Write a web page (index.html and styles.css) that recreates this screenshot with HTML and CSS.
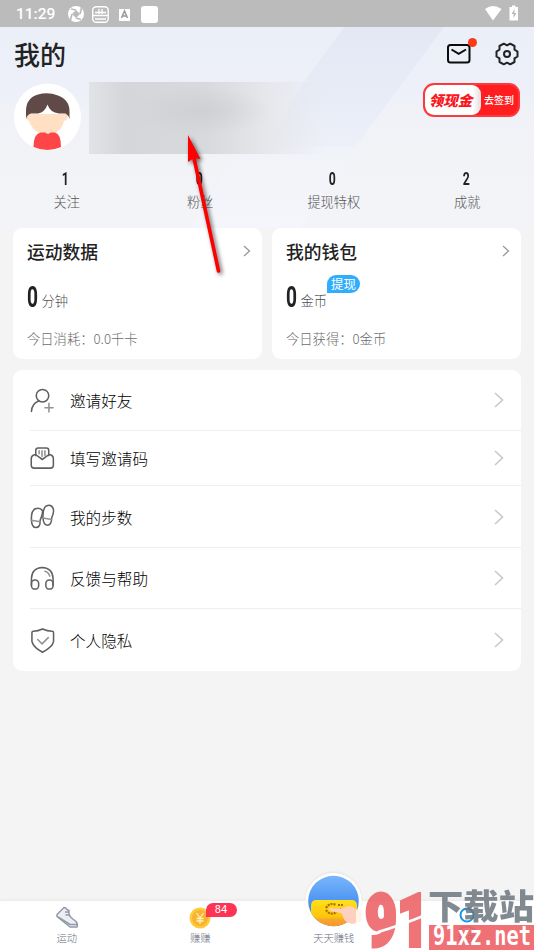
FILE: index.html
```html
<!DOCTYPE html>
<html lang="zh-CN">
<head>
<meta charset="utf-8">
<title>我的</title>
<link rel="stylesheet" href="styles.css">
</head>
<body>
<div class="screen">
  <div class="statusbar">
    <span class="time">11:29</span>
    <svg class="status-icons" width="92" height="20" viewBox="0 0 92 20">
      <circle cx="8" cy="10" r="8" fill="#fff"/>
      <path d="m8 6 4 4-4 4-4-4z" fill="#bbb"/>
      <path d="M8 6 3 5M12 10l1.500-6M8 14l5 1.500M4 10l-1.500 6" stroke="#bbb" stroke-width="1.600" fill="none"/>
      <rect x="24.700" y="2.700" width="15.500" height="15.500" rx="3.500" fill="none" stroke="#fff" stroke-width="1.400"/>
      <path d="M25 11.500h15M27 15h11M27 8.500h11M31 5v5M34 5v5" stroke="#fff" stroke-width="1.300"/>
      <rect x="51" y="5" width="11" height="12" fill="#fff"/>
      <path d="m53.500 14 3-7 3 7M54.500 12h4" stroke="#999" stroke-width="1.500" fill="none"/>
      <rect x="73" y="2" width="17" height="17" rx="3" fill="#fff"/>
    </svg>
    <svg class="signal" width="36" height="18" viewBox="0 0 36 18">
      <path d="M1 5q8-6 16.500 0L9 16.500z" fill="#fff"/>
      <path d="M25.500 3H28V1.500h3.500V3H34v13.500h-8.500z" fill="#fff"/>
      <path d="m30.500 5-3 5h2v4l3-5h-2z" fill="#bbb"/>
    </svg>
  </div>

  <section class="hero">
    <svg class="hero-bg" width="534" height="201" viewBox="0 0 534 201">
      <defs>
        <linearGradient id="band" x1="0" y1="0" x2="0" y2="1"><stop offset="0" stop-color="#e3e8f4"/><stop offset=".6" stop-color="#e8ecf7"/><stop offset="1" stop-color="#edf0f8"/></linearGradient>
        <linearGradient id="wide" x1="0" y1="0" x2="0" y2="1"><stop offset="0" stop-color="#eaeef8" stop-opacity="0"/><stop offset="1" stop-color="#f4f6fb"/></linearGradient>
      </defs>
      <path d="M307 51 250 110 190 201H300L355 120 444 0z" fill="url(#wide)"/>
      <path d="M344 0H444L355 120H265L306 52z" fill="url(#band)"/>
    </svg>
    <div class="titlebar">
      <h1>我的</h1>
      <div class="actions">
        <svg class="mail" width="32" height="30" viewBox="0 0 32 30">
          <rect x="3" y="10" width="21.500" height="17.500" rx="2.500" fill="none" stroke="#0c0c0c" stroke-width="2"/>
          <path d="m6.500 14.500 7.200 4.300 7.300-4.300" fill="none" stroke="#0c0c0c" stroke-width="2"/>
          <circle cx="27.500" cy="7.500" r="4.500" fill="#fb3a17"/>
        </svg>
        <svg class="gear" width="24" height="24" viewBox="0 0 24 24" fill="none" stroke="#222" stroke-width="2" stroke-linejoin="round">
          <path d="M22.500 9.500v5L19.500 16.400V20l-4.300 2.300L12 20.700l-3.200 1.600L4.500 20v-3.600L1.500 14.500v-5L4.500 7.600V4l4.300-2.300L12 3.300l3.200-1.600L19.500 4v3.600z"/>
          <circle cx="12" cy="12" r="3"/>
        </svg>
      </div>
    </div>
    <div class="profile">
      <svg class="avatar" width="68" height="68" viewBox="0 0 68 68">
        <circle cx="34.500" cy="34" r="33.500" fill="#fff"/>
        <path d="M13 31h42q0 6-4 7-3 13-17 14-13-1-18-14-3-1-3-7z" fill="#ffe0c2"/>
        <path d="M13 36V28Q13 15 25 11.500q10-3 20 1Q57 17 56.500 29v7q-1-4-4-5.500H46q-9-1-11.500-9Q32 29 25 30.500h-7q-4 1-5 5.500z" fill="#604a47"/>
        <path d="M20.500 64q0-13 7-14.500h4.500l3 1.500 3-1.500h4q6 1.500 6 14.500-13.500 6-27.500 0z" fill="#fe4547"/>
      </svg>
      <div class="masked-name"></div>
      <div class="cash"><b>领现金</b><span>去签到</span></div>
    </div>
    <div class="stats">
      <div><b class="num">1</b><span>关注</span></div>
      <div><b class="num">0</b><span>粉丝</span></div>
      <div><b class="num">0</b><span>提现特权</span></div>
      <div><b class="num">2</b><span>成就</span></div>
    </div>
  </section>

  <main>
    <div class="cards">
      <article class="card">
        <header><h2>运动数据</h2><svg class="chev-s" width="10" height="14" viewBox="0 0 10 14"><path d="m2 2 5.500 5L2 12"/></svg></header>
        <p class="amount"><b>0</b><span>分钟</span></p>
        <p class="today">今日消耗：0.0千卡</p>
      </article>
      <article class="card">
        <header><h2>我的钱包</h2><svg class="chev-s" width="10" height="14" viewBox="0 0 10 14"><path d="m2 2 5.500 5L2 12"/></svg></header>
        <p class="amount"><b>0</b><span>金币</span><em>提现</em></p>
        <p class="today">今日获得：0金币</p>
      </article>
    </div>
    <nav class="menu">
      <a><svg class="icon" viewBox="0 0 26 26"><circle cx="13" cy="8" r="6.500"/><path d="M1.500 24.500Q2 16 9 13.500"/><path class="pale" d="M15.500 20.500h8.500M19.700 16v9"/></svg><span>邀请好友</span><svg class="chev" viewBox="0 0 12 18"><path d="m2 2 7.500 7L2 16"/></svg></a>
      <a><svg class="icon" viewBox="0 0 26 26"><path d="M6 10V4.500Q6 2 8.500 2h8.500Q19.500 2 19.500 4.500V10"/><path d="M6 9H4.500Q1.300 10 1.300 13v7q0 3 3 3h17q3 0 3-3v-7q0-3-3-4h-1.800L12.800 14z"/><path class="pale" d="M9.500 5v3M12.500 5v6M15.500 5v5"/></svg><span>填写邀请码</span><svg class="chev" viewBox="0 0 12 18"><path d="m2 2 7.500 7L2 16"/></svg></a>
      <a><svg class="icon" viewBox="0 0 26 26"><path d="M1.500 17Q1 7 5.500 5q5-2 7.500 2 .5 3.500-2.500 10 .5 7.500-4.500 7.500-4 0-4.500-7.500z"/><path d="M13.500 14.500Q13 4.500 17 2q5-2 7 2.500 1.500 4-1.500 10 0 7.500-4.500 7.500-4-.5-4.500-7.500z"/><path class="pale" d="m1.500 17 9 1.500M13.500 14.500l9 1.500"/></svg><span>我的步数</span><svg class="chev" viewBox="0 0 12 18"><path d="m2 2 7.500 7L2 16"/></svg></a>
      <a><svg class="icon" viewBox="0 0 26 26"><path d="M1.500 20v-7Q2 2 12.700 1.500 23.500 2 24 13v7"/><rect x="1.500" y="14.500" width="7.500" height="9.500" rx="3.500"/><rect x="16.500" y="14.500" width="7.500" height="9.500" rx="3.500"/><path class="pale" d="M15.500 5.500q4 1 5 5"/></svg><span>反馈与帮助</span><svg class="chev" viewBox="0 0 12 18"><path d="m2 2 7.500 7L2 16"/></svg></a>
      <a><svg class="icon" viewBox="0 0 26 26"><path d="M13 1q5 2.300 10 2.300 1.500 0 1.500 1.700v9Q23.500 20 13 25.200 3.500 20 2 14V5q0-1.700 1.500-1.700Q8.500 3.300 13 1z"/><path class="pale" d="m8 12 4.500 4.500 6.500-6.500"/></svg><span>个人隐私</span><svg class="chev" viewBox="0 0 12 18"><path d="m2 2 7.500 7L2 16"/></svg></a>
    </nav>
  </main>

  <footer class="tabs">
    <a><svg width="24" height="24" viewBox="0 0 24 24" fill="#eceef2" stroke="#9299a8" stroke-width="1.500" stroke-linejoin="round"><path d="M2 8.500 9 1.500q2 0 3 2l2 1v4l2 3 5 4q2 2 1 5.500h-7L2 10.500z"/><path d="m3 11 12 7.500h7M10 6h4M10.500 9h4" fill="none"/></svg><span>运动</span></a>
    <a><svg width="24" height="24" viewBox="0 0 24 24"><circle cx="12" cy="12" r="10.500" fill="#ffcb3b"/><circle cx="12" cy="12" r="8" fill="#f8b334"/><path d="m8.500 7 3.500 5 3.500-5M12 12v6M8.500 12.500h7M8.500 15h7" stroke="#fff3ae" stroke-width="1.300" fill="none"/></svg><i class="count">84</i><span>赚赚</span></a>
    <a class="daily"><svg width="58" height="58" viewBox="0 0 58 58">
      <defs>
        <linearGradient id="sky" x1="0" y1="0" x2="0" y2="1"><stop offset="0" stop-color="#81baff"/><stop offset=".6" stop-color="#438eee"/></linearGradient>
        <linearGradient id="gold" x1="0" y1="0" x2="0" y2="1"><stop offset="0" stop-color="#ffe01b"/><stop offset=".5" stop-color="#fdc50b"/><stop offset=".58" stop-color="#f7a52c"/><stop offset="1" stop-color="#f48a30"/></linearGradient>
        <clipPath id="disc"><circle cx="28.500" cy="29" r="25.300"/></clipPath>
      </defs>
      <circle cx="28.500" cy="29" r="28" fill="#fff"/>
      <g clip-path="url(#disc)"><path d="M0 0h58v58H0z" fill="url(#sky)"/><rect x="6" y="28" width="46" height="34" rx="5" fill="url(#gold)"/></g>
      <path d="M21 36q4-6 10-3M21 38q4 6 11 2M33 33h5m-3 4h4" stroke="#a96c05" stroke-width="2.200" stroke-dasharray="2 1" fill="none"/>
      <path d="M25 36q-2 2 1 3l11 2.500q1 6 5 9l6 1.500 6-3V39l-6-4q-5-2-10 1-6 1.500-13 0z" fill="#ffd0c0"/><path d="m51 38 5 2v9l-5 2z" fill="#fff4e6"/>
    </svg><span>天天赚钱</span></a>
    <a class="mine"><svg width="24" height="24" viewBox="0 0 24 24" fill="none" stroke="#1593e5" stroke-width="2"><circle cx="12" cy="9" r="6.500"/><path d="M4 24q8-7 16 0" stroke="#bbb"/></svg><span>我的</span></a>
  </footer>

  <svg class="site-mark" width="174" height="65" viewBox="0 0 174 65">
    <g opacity=".84">
      <text class="mark-number" x="5" y="61" textLength="64" lengthAdjust="spacingAndGlyphs">91</text>
      <rect x="69" y="40" width="105" height="25" fill="#ec565c"/>
      <text class="mark-cn" x="68" y="34" textLength="106" lengthAdjust="spacingAndGlyphs">下载站</text>
    </g>
    <path d="M18 47Q42 40 68 29" fill="none" stroke="#fff" stroke-width="2.500"/>
    <text class="mark-url" x="73" y="60" textLength="98" lengthAdjust="spacingAndGlyphs">91xz.net</text>
  </svg>
  <svg class="pointer" width="60" height="150" viewBox="0 0 60 150">
    <path d="M14 28 38.500 141" stroke="#f00" stroke-width="3.600" stroke-linecap="round"/>
    <path d="M8 5v27l6-4 6.500 1z" fill="#f00"/>
  </svg>
</div>
</body>
</html>
```
FILE: styles.css
```css
* { box-sizing: border-box; }
body { margin: 0; font-family: "Noto Sans CJK SC", sans-serif; color: #222; background: #f4f4f4; }
h1, h2, p { margin: 0; }
svg { flex: none; display: block; }
.screen { position: relative; width: 534px; height: 950px; overflow: hidden; display: flex; flex-direction: column; }
.statusbar { height: 27px; flex: none; background: #bbb; display: flex; align-items: center; padding: 0 14px 0 16px; color: #fff; }
.time { font: 500 15.500px/27px Roboto, sans-serif; width: 52px; padding-top: 1px; }
.signal { margin: -2px 0 0 auto; }
.hero { position: relative; height: 201px; flex: none; background: linear-gradient(#ebeff8, #edf0f8 33%, #f0f2f7 42%, #f3f4f7); }
.hero-bg { position: absolute; left: 0; top: 0; }
.titlebar { position: relative; height: 55px; padding: 0 15px 0 14px; display: flex; justify-content: space-between; }
h1 { font-size: 26px; line-height: 53px; font-weight: 500; }
.actions { display: flex; align-items: center; gap: 18px; }
.mail { margin-top: -9px; }
.gear { margin-top: -2px; }
.profile { position: relative; height: 72px; padding: 0 14px 0 13px; display: flex; }
.avatar { margin-top: 1px; }
.masked-name { width: 235px; height: 72px; margin-left: 8px; background: radial-gradient(ellipse at 48% 40%, #c9cbd0aa, #c9cbd000 40%), linear-gradient(90deg, #e2e3e7, #d5d6da 15%, #d8d9dc 50%, #e5e7eb 75%, #e5e7eb00); }
.cash { width: 97px; height: 34px; margin: 1px 0 0 auto; border: 2px solid #fc393d; border-radius: 11px; background: #ff1d20; display: flex; overflow: hidden; color: #fff; }
.cash b { width: 56px; padding-right: 5px; background: linear-gradient(90deg, #fff 85%, #e5dede); border-radius: 8px 9px 9px 8px; color: #fc151b; font-size: 14.500px; line-height: 29px; font-weight: 900; font-style: italic; text-align: center; }
.cash span { font-size: 10px; line-height: 29px; font-weight: 500; padding-left: 3px; white-space: nowrap; }
.stats { position: relative; display: grid; grid-template-columns: repeat(4, 1fr); padding-top: 14px; text-align: center; }
.stats div { display: flex; flex-direction: column; align-items: center; }
.stats b { font: 700 18px/22px Roboto, sans-serif; transform: scaleX(.68); margin-right: 3px; }
.stats span { font-size: 13.200px; line-height: 23px; color: #525254; font-weight: 300; }
main { padding: 0 13px; }
.cards { display: grid; grid-template-columns: 249px 249px; gap: 10px; position: relative; }
.card { height: 131px; border-radius: 9px; background: #fff; padding: 11px 10px 0 14px; }
.card header { display: flex; justify-content: space-between; align-items: center; height: 24px; }
h2 { font-size: 17.800px; line-height: 24px; font-weight: 500; }
.chev-s { fill: none; stroke: #999; stroke-width: 1.300; }
.amount { display: flex; height: 50px; margin-top: 16px; }
.amount b { font: 700 29px/36px Roboto, sans-serif; width: 14.500px; transform: scaleX(.66); transform-origin: left; }
.amount span { font-size: 13.300px; line-height: 44px; color: #505050; font-weight: 300; }
.amount em { height: 18px; width: 33px; margin-top: -4px; border-radius: 9px 9px 9px 0; background: #31adfd; color: #fff; font-size: 12.500px; line-height: 17px; font-style: normal; text-align: center; }
.today { font-size: 13.300px; line-height: 20px; color: #6c6c6c; font-weight: 300; }
.menu { margin-top: 11px; height: 301px; border-radius: 9px; background: #fff; overflow: hidden; display: grid; grid-template-rows: 61px 55px 62px 61px 62px; }
.menu a { margin-left: 17px; display: flex; align-items: center; padding-right: 16px; border-bottom: 1px solid #eee; }
.menu a:last-child { border: 0; }
.icon { width: 25px; height: 25px; fill: none; stroke: #606060; stroke-width: 1.600; stroke-linecap: round; }
.icon .pale { stroke: #929292; }
.menu span { font-size: 15.600px; font-weight: 300; margin-left: 15px; flex: 1; line-height: 24px; color: #000; }
.chev { width: 12px; height: 18px; fill: none; stroke: #c8c8c8; stroke-width: 1.600; }
.tabs { margin-top: auto; height: 49px; flex: none; background: #fff; display: grid; grid-template-columns: repeat(4, 1fr); box-shadow: 0 -1px 3px #0000000c; }
.tabs a { position: relative; display: flex; flex-direction: column; align-items: center; padding-top: 5px; }
.tabs span { font-size: 10.300px; line-height: 15px; color: #6b7080; font-weight: 300; }
.count { position: absolute; left: 72px; top: 2px; width: 31px; height: 14px; border-radius: 7px 7px 7px 0; background: #ff3354; color: #fff; font: 11px/14px Roboto, sans-serif; text-align: center; }
.tabs .daily { padding: 0; margin-top: -29px; }
.daily svg { filter: drop-shadow(0 -1px 1px #0001); }
.tabs .mine span { color: #1593e5; }
.site-mark { position: absolute; left: 360px; top: 885px; }
.mark-number { font: 900 72px Roboto, sans-serif; fill: #ec5a5f; stroke: #ec5a5f; stroke-width: 4px; }
.mark-cn { font: 900 34px "Noto Sans CJK SC", sans-serif; fill: #6b747d; }
.mark-url { font: 700 26px "DejaVu Sans Mono", monospace; fill: #fff; }
.pointer { position: absolute; left: 180px; top: 130px; filter: drop-shadow(2px 2px 2px #0009); }
```
